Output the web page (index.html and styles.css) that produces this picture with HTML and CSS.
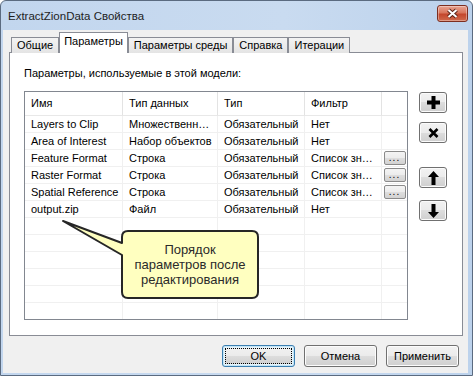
FILE: index.html
```html
<!DOCTYPE html>
<html lang="ru">
<head>
    <meta charset="UTF-8">
    <title>ExtractZionData Свойства</title>
    <link rel="stylesheet" href="styles.css">
</head>
<body>
    <div class="window">
        <!-- Title bar -->
        <div class="titlebar">
            <span class="title">ExtractZionData Свойства</span>
            <button class="close-btn" aria-label="Закрыть">
                <svg width="13" height="11" viewBox="0 0 13 11">
                    <path d="M2.5 2 L10.5 9 M10.5 2 L2.5 9" stroke="#5a2418" stroke-width="4"/>
                    <path d="M2.5 2 L10.5 9 M10.5 2 L2.5 9" stroke="#fff" stroke-width="2"/>
                </svg>
            </button>
        </div>

        <div class="client">
            <!-- Tabs -->
            <div class="tabs">
                <div class="tab">Общие</div>
                <div class="tab active">Параметры</div>
                <div class="tab">Параметры среды</div>
                <div class="tab">Справка</div>
                <div class="tab">Итерации</div>
            </div>

            <div class="panel">
                <p class="caption">Параметры, используемые в этой модели:</p>
                <div class="panel-body">
                    <div class="grid">
                        <div class="cell head">Имя</div>
                        <div class="cell head">Тип данных</div>
                        <div class="cell head">Тип</div>
                        <div class="cell head">Фильтр</div>
                        <div class="cell head"></div>

                        <div class="cell">Layers to Clip</div>
                        <div class="cell">Множественн…</div>
                        <div class="cell">Обязательный</div>
                        <div class="cell">Нет</div>
                        <div class="cell"></div>

                        <div class="cell">Area of Interest</div>
                        <div class="cell">Набор объектов</div>
                        <div class="cell">Обязательный</div>
                        <div class="cell">Нет</div>
                        <div class="cell"></div>

                        <div class="cell">Feature Format</div>
                        <div class="cell">Строка</div>
                        <div class="cell">Обязательный</div>
                        <div class="cell">Список зн…</div>
                        <div class="cell btn-cell"><button class="dots-btn">...</button></div>

                        <div class="cell">Raster Format</div>
                        <div class="cell">Строка</div>
                        <div class="cell">Обязательный</div>
                        <div class="cell">Список зн…</div>
                        <div class="cell btn-cell"><button class="dots-btn">...</button></div>

                        <div class="cell">Spatial Reference</div>
                        <div class="cell">Строка</div>
                        <div class="cell">Обязательный</div>
                        <div class="cell">Список зн…</div>
                        <div class="cell btn-cell"><button class="dots-btn">...</button></div>

                        <div class="cell">output.zip</div>
                        <div class="cell">Файл</div>
                        <div class="cell">Обязательный</div>
                        <div class="cell">Нет</div>
                        <div class="cell"></div>

                        <!-- empty rows -->
                        <div class="cell"></div><div class="cell"></div><div class="cell"></div><div class="cell"></div><div class="cell"></div>
                        <div class="cell"></div><div class="cell"></div><div class="cell"></div><div class="cell"></div><div class="cell"></div>
                        <div class="cell"></div><div class="cell"></div><div class="cell"></div><div class="cell"></div><div class="cell"></div>
                        <div class="cell"></div><div class="cell"></div><div class="cell"></div><div class="cell"></div><div class="cell"></div>
                        <div class="cell"></div><div class="cell"></div><div class="cell"></div><div class="cell"></div><div class="cell"></div>
                        <div class="cell"></div><div class="cell"></div><div class="cell"></div><div class="cell"></div><div class="cell"></div>
                    </div>

                    <!-- Add / remove / move buttons -->
                    <div class="side-buttons">
                        <button class="side-btn btn-add" aria-label="Добавить">
                            <svg width="13" height="13" viewBox="0 0 13 13"><path d="M4.5 0 H8.5 V4.5 H13 V8.5 H8.5 V13 H4.5 V8.5 H0 V4.5 H4.5 Z" fill="#000"/></svg>
                        </button>
                        <button class="side-btn btn-remove" aria-label="Удалить">
                            <svg width="11" height="10" viewBox="0 0 11 10"><path d="M1.5 1 L9.5 9 M9.5 1 L1.5 9" stroke="#000" stroke-width="2.6"/></svg>
                        </button>
                        <button class="side-btn btn-up" aria-label="Вверх">
                            <svg width="11" height="14" viewBox="0 0 11 14"><path d="M5.5 0 L11 6 H7.5 V14 H3.5 V6 H0 Z" fill="#000"/></svg>
                        </button>
                        <button class="side-btn btn-down" aria-label="Вниз">
                            <svg width="11" height="14" viewBox="0 0 11 14"><path d="M5.5 14 L11 8 H7.5 V0 H3.5 V8 H0 Z" fill="#000"/></svg>
                        </button>
                    </div>
                </div>
            </div>

            <!-- Dialog buttons -->
            <div class="dialog-buttons">
                <button class="btn default"><span class="focus">OK</span></button>
                <button class="btn">Отмена</button>
                <button class="btn">Применить</button>
            </div>
        </div>

        <!-- Callout -->
        <div class="callout">
            <svg class="callout-shape" width="200" height="84" viewBox="0 0 200 84">
                <path d="M3 3 L62 25 L62 19 Q62 13 68 13 L192 13 Q198 13 198 19 L198 74 Q198 80 192 80 L68 80 Q62 80 62 74 L62 37 Z" fill="#ffffc0" stroke="#262626" stroke-width="2" stroke-linejoin="round"/>
            </svg>
            <div class="callout-text">Порядок<br>параметров после<br>редактирования</div>
        </div>
    </div>
</body>
</html>
```

FILE: styles.css
```css
* {
    margin: 0;
    padding: 0;
    box-sizing: border-box;
}
body {
    width: 473px;
    height: 376px;
    overflow: hidden;
    font-family: "Liberation Sans", Arial, sans-serif;
    font-size: 11px;
    color: #000;
    background: #fff;
}
button {
    font-family: inherit;
    font-size: 11px;
    font-weight: normal;
    color: #000;
}
/* Window frame */
.window {
    position: relative;
    width: 473px;
    height: 376px;
    display: flex;
    flex-direction: column;
    background: linear-gradient(90deg, #c2d6ee, #c9dbf0 60%, #bcd2ec);
    border: 1px solid #5b6b80;
    border-radius: 6px 6px 0 0;
}
.titlebar {
    height: 29px;
    display: flex;
    justify-content: space-between;
    align-items: center;
    padding: 0 4px 0 7px;
}
.title {
    font-size: 11.5px;
    color: #1e1e1e;
}
.close-btn {
    align-self: flex-start;
    margin-top: 4px;
    width: 31px;
    height: 17px;
    border: 1px solid #7d2e20;
    border-radius: 3px;
    background: linear-gradient(#e8a493 0%, #d8765c 45%, #c4472c 55%, #cf6a4c 100%);
    box-shadow: inset 0 0 0 1px rgba(255, 255, 255, 0.35);
    display: flex;
    align-items: center;
    justify-content: center;
}
.client {
    flex: 1;
    margin: 0 4px 2px 2px;
    padding: 2px 5px 0 6px;
    background: #f0f0f0;
}
/* Tabs */
.tabs {
    display: flex;
    align-items: flex-end;
    height: 21px;
    margin-bottom: -1px;
    padding-left: 2px;
}
.tab {
    height: 16px;
    line-height: 15px;
    padding: 0 5px;
    border: 1px solid #898c95;
    border-bottom: none;
    background: linear-gradient(#f3f3f3, #e4e4e4);
}
.tab.active {
    position: relative;
    z-index: 1;
    height: 21px;
    line-height: 17px;
    padding: 0 4px;
    background: #fff;
}
.panel {
    background: #fff;
    border: 1px solid #898c95;
    padding: 14px 15px 15px 14px;
}
.caption {
    line-height: 13px;
    margin-bottom: 11px;
}
.panel-body {
    display: flex;
    gap: 11px;
    align-items: flex-start;
}
/* Parameter list */
.grid {
    width: 384px;
    height: 229px;
    border: 1px solid #828790;
    display: grid;
    grid-template-columns: 98px 95px 87px 77px 1fr;
    grid-template-rows: 24px;
    grid-auto-rows: 17px;
    align-content: start;
    overflow: hidden;
}
.cell {
    padding-left: 6px;
    line-height: 16px;
    white-space: nowrap;
    overflow: hidden;
    border-right: 1px solid #f0f0f0;
    border-bottom: 1px solid #f0f0f0;
}
.cell:nth-child(5n) {
    border-right: none;
}
.cell.head {
    line-height: 23px;
    border-right-color: #e3e3e3;
    border-bottom-color: #e8e8e8;
}
.btn-cell {
    padding: 0;
    display: flex;
    align-items: center;
    justify-content: center;
}
.dots-btn {
    width: 22px;
    height: 14px;
    border: 1px solid #8a8a8a;
    border-radius: 2px;
    background: linear-gradient(#f4f4f4 0%, #ececec 50%, #dedede 50%, #d2d2d2 100%);
    font-size: 10px;
    line-height: 12px;
    letter-spacing: 1px;
}
.side-buttons {
    display: flex;
    flex-direction: column;
    padding-top: 1px;
}
.side-btn {
    width: 28px;
    height: 21px;
    border: 1px solid #707070;
    border-radius: 3px;
    background: linear-gradient(#f2f2f2 0%, #ebebeb 50%, #dddddd 50%, #cfcfcf 100%);
    box-shadow: inset 0 0 0 1px #fbfbfb;
    display: flex;
    align-items: center;
    justify-content: center;
}
.btn-remove {
    margin-top: 9px;
}
.btn-up {
    margin-top: 24px;
}
.btn-down {
    margin-top: 12px;
}
/* Dialog buttons */
.dialog-buttons {
    display: flex;
    justify-content: flex-end;
    gap: 9px;
    margin-top: 9px;
    padding-right: 4px;
}
.btn {
    width: 73px;
    height: 22px;
    border: 1px solid #707070;
    border-radius: 3px;
    background: linear-gradient(#f2f2f2 0%, #ebebeb 50%, #dddddd 50%, #cfcfcf 100%);
    box-shadow: inset 0 0 0 1px #fcfcfc;
}
.btn.default {
    border-color: #3c7fb1;
    box-shadow: inset 0 0 0 1px #c4e5f6, inset 0 0 0 2px #e5f4fc;
    padding: 2px;
}
.btn .focus {
    display: block;
    height: 100%;
    line-height: 14px;
    border: 1px dotted #000;
}
/* Callout */
.callout {
    position: absolute;
    left: 59px;
    top: 217px;
    width: 200px;
    height: 84px;
}
.callout-shape {
    position: absolute;
    left: 0;
    top: 0;
}
.callout-text {
    position: absolute;
    left: 62px;
    top: 13px;
    width: 136px;
    height: 67px;
    display: flex;
    align-items: center;
    justify-content: center;
    text-align: center;
    font-size: 13px;
    line-height: 15px;
    color: #2a2a2a;
}
```
